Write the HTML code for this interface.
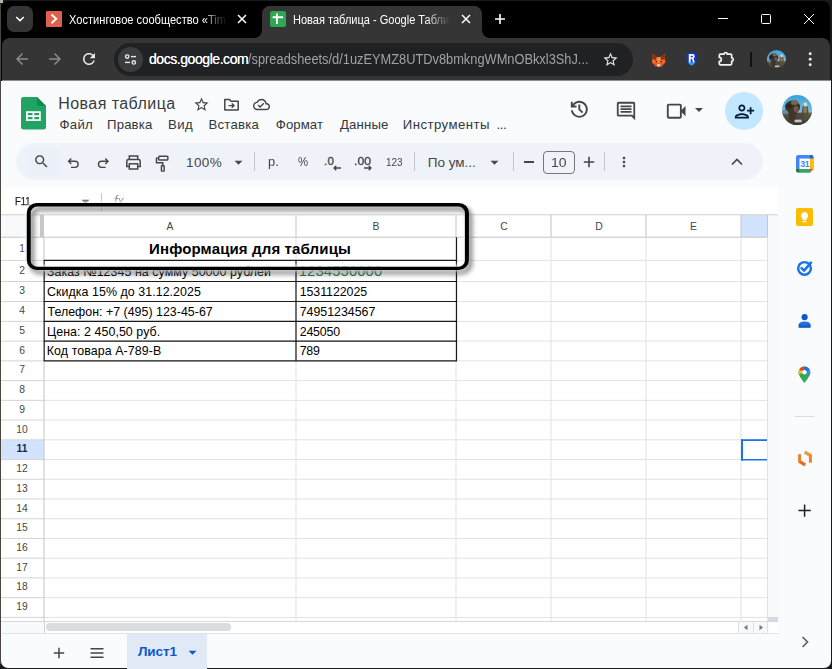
<!DOCTYPE html>
<html lang="ru"><head><meta charset="utf-8"><title>Новая таблица - Google Таблицы</title>
<style>
html,body{margin:0;padding:0;}
body{width:832px;height:669px;overflow:hidden;position:relative;background:#000;font-family:"Liberation Sans",sans-serif;}
.a{position:absolute;}
.t{position:absolute;white-space:nowrap;line-height:1;}
svg{position:absolute;overflow:visible;}
#win{left:1px;top:1px;width:829px;height:666.5px;background:#000;border-radius:7px 7px 7px 7px;overflow:hidden;}
#page{left:1px;top:81px;width:829.5px;height:586.5px;background:#f9fbfd;border-radius:0 0 7px 7px;}
</style></head><body>
<div class="a" style="left:0;top:0;width:832px;height:669px;background:#1a1a1a;"></div>
<div class="a" style="left:0;top:0;width:3px;height:3px;background:#b9b2a6;"></div>
<div class="a" style="left:0;top:4px;width:1px;height:660px;background:#4d4542;"></div>
<div class="a" id="win"></div>
<!-- chrome toolbar -->
<div class="a" style="left:2px;top:38px;width:828px;height:43px;background:#353535;border-radius:8px 8px 0 0;"></div>
<!-- tab search button -->
<div class="a" style="left:7px;top:6px;width:25.5px;height:25.5px;background:#353535;border-radius:7px;"></div>
<svg style="left:14px;top:14px" width="12" height="10" viewBox="0 0 12 10"><path d="M2.2 3 L6 6.6 L9.8 3" fill="none" stroke="#fff" stroke-width="1.5"/></svg>
<!-- tab1 favicon -->
<div class="a" style="left:46px;top:11px;width:15.5px;height:15.5px;background:#e0604f;border-radius:1px;"></div>
<svg style="left:46px;top:11px" width="16" height="16" viewBox="0 0 16 16"><path d="M5.4 3.4 L10.2 7.8 L5.4 12.2" fill="none" stroke="#fff" stroke-width="2"/></svg>
<!-- tab1 close -->
<svg style="left:236px;top:13px" width="12" height="12" viewBox="0 0 12 12"><path d="M2 2 L10 10 M10 2 L2 10" stroke="#fff" stroke-width="1.5"/></svg>
<!-- active tab -->
<div class="a" style="left:262px;top:6px;width:220px;height:34px;background:#353535;border-radius:8px 8px 0 0;"></div>
<svg style="left:254px;top:30px" width="8" height="8" viewBox="0 0 8 8"><path d="M8 0 V8 H0 A8 8 0 0 0 8 0Z" fill="#353535"/></svg>
<svg style="left:482px;top:30px" width="8" height="8" viewBox="0 0 8 8"><path d="M0 0 V8 H8 A8 8 0 0 1 0 0Z" fill="#353535"/></svg>
<!-- tab2 favicon -->
<div class="a" style="left:270px;top:11px;width:15.5px;height:15.5px;background:#2ea652;border-radius:2px;"></div>
<svg style="left:270px;top:11px" width="16" height="16" viewBox="0 0 16 16"><path d="M6.9 2.6 V13 M2.6 6.3 H13" fill="none" stroke="#fff" stroke-width="1.9"/></svg>
<svg style="left:460px;top:13px" width="12" height="12" viewBox="0 0 12 12"><path d="M2 2 L10 10 M10 2 L2 10" stroke="#fff" stroke-width="1.5"/></svg>
<!-- new tab -->
<svg style="left:494px;top:13px" width="12" height="12" viewBox="0 0 12 12"><path d="M6 1 V11 M1 6 H11" stroke="#fff" stroke-width="1.6"/></svg>
<!-- window controls -->
<svg style="left:717px;top:13px" width="12" height="12" viewBox="0 0 12 12"><path d="M1 5.5 H11" stroke="#fff" stroke-width="1"/></svg>
<svg style="left:760px;top:13px" width="12" height="12" viewBox="0 0 12 12"><rect x="1.5" y="1.5" width="9" height="9" rx="1" fill="none" stroke="#fff" stroke-width="1"/></svg>
<svg style="left:803px;top:13px" width="12" height="12" viewBox="0 0 12 12"><path d="M1 1 L11 11 M11 1 L1 11" stroke="#fff" stroke-width="1"/></svg>
<!-- nav icons -->
<svg style="left:13px;top:50px" width="18" height="18" viewBox="0 0 24 24"><path fill="#8a8a8a" d="M20 11H7.83l5.59-5.59L12 4l-8 8 8 8 1.41-1.41L7.83 13H20v-2z"/></svg>
<svg style="left:46px;top:50px" width="18" height="18" viewBox="0 0 24 24"><path fill="#8a8a8a" d="M12 4l-1.41 1.41L16.17 11H4v2h12.17l-5.58 5.59L12 20l8-8z"/></svg>
<svg style="left:80px;top:50px" width="18" height="18" viewBox="0 0 24 24"><path fill="#e8e8e8" d="M17.65 6.35C16.2 4.9 14.21 4 12 4c-4.42 0-7.99 3.58-7.99 8s3.57 8 7.99 8c3.73 0 6.84-2.55 7.73-6h-2.08c-.82 2.33-3.04 4-5.65 4-3.31 0-6-2.69-6-6s2.69-6 6-6c1.66 0 3.14.69 4.22 1.78L13 11h7V4l-2.35 2.35z"/></svg>
<!-- omnibox -->
<div class="a" style="left:114px;top:43px;width:519px;height:32.5px;background:#202124;border-radius:16.25px;"></div>
<div class="a" style="left:118px;top:47px;width:24.5px;height:24.5px;background:#3b3c3e;border-radius:50%;"></div>
<svg style="left:123px;top:52px" width="15" height="15" viewBox="0 0 15 15"><g fill="none" stroke="#e8e8e8" stroke-width="1.4"><circle cx="4.2" cy="4.6" r="1.7"/><path d="M8 4.6 H13"/><circle cx="10.8" cy="10.4" r="1.7"/><path d="M2 10.4 H7"/></g></svg>
<svg style="left:602px;top:50.5px" width="17" height="17" viewBox="0 0 24 24"><path fill="#e8e8e8" d="M22 9.24l-7.19-.62L12 2 9.190 8.630 2 9.240l5.460 4.730L5.820 21 12 17.270 18.180 21l-1.630-7.030L22 9.240zM12 15.400l-3.760 2.270 1-4.280-3.320-2.880 4.380-.38L12 6.100l1.710 4.040 4.380.38-3.320 2.880 1 4.280L12 15.400z"/></svg>
<!-- extensions -->
<svg style="left:650.5px;top:52.5px" width="15.4" height="14.4" viewBox="0 0 18 17"><path d="M1 .8 L7 4.600 H11 L17 .8 L16 7.500 L17 11 L12.500 16 H5.500 L1 11 L2 7.500Z" fill="#ee5f26"/><path d="M1 .8 L7 4.600 L5.500 8.500 L2 7.500Z M17 .8 L11 4.600 L12.500 8.500 L16 7.500Z" fill="#8a3315"/><path d="M7 4.600 H11 L12 9.500 L9 12 L6 9.500Z" fill="#f7843c"/><path d="M2 7.500 L5.500 8.500 L6 9.500 L4 12.500 L1 11Z M16 7.500 L12.500 8.500 L12 9.500 L14 12.500 L17 11Z" fill="#f26a2c"/><path d="M6.500 13.200 H11.500 L10.500 16 H7.500Z" fill="#e6d9d0"/><path d="M4 12.500 L6.500 13.200 L7.500 16 H5.500Z M14 12.500 L11.500 13.200 L10.500 16 H12.500Z" fill="#d9531f"/><circle cx="6.200" cy="10" r=".9" fill="#2a1a14"/><circle cx="11.800" cy="10" r=".9" fill="#2a1a14"/></svg>
<svg style="left:686.4px;top:52.2px" width="11.200" height="14" viewBox="0 0 16 20"><path d="M1 1 H15 V12 Q15 15.500 8 19.500 Q1 15.500 1 12Z" fill="#0c35d8"/><path d="M2.500 14.500 Q4.500 17.500 8 19.500 Q11.500 17.500 13.500 14.500Z" fill="#2f9ff5"/><path d="M4 3 H9.500 Q12.500 3 12.500 6.200 Q12.500 8.400 10.800 9.200 L12.600 14.500 H9.900 L8.400 9.800 H6.700 V14.500 H4Z M6.700 5.200 V7.600 H8.900 Q9.900 7.600 9.900 6.400 Q9.900 5.200 8.900 5.200Z" fill="#fff"/></svg>
<svg style="left:717.4px;top:50px" width="18" height="18" viewBox="0 0 18 18"><path d="M3.500 4.200 H7 A1.600 1.600 0 0 1 10.200 4.200 H13.500 Q14.700 4.200 14.700 5.400 V8 A1.600 1.600 0 0 1 14.700 11.200 V13.600 Q14.700 14.800 13.500 14.800 H3.500 Q2.300 14.800 2.300 13.600 V11.400 A2 2 0 0 0 2.300 7.400 V5.400 Q2.300 4.200 3.500 4.200Z" fill="none" stroke="#f2f2f2" stroke-width="1.700" stroke-linejoin="round"/></svg>
<div class="a" style="left:750px;top:52px;width:1.500px;height:15px;background:#111;"></div>
<svg style="left:766.5px;top:50px" width="19" height="19" viewBox="0 0 30 30"><defs><clipPath id="av2c"><circle cx="15" cy="15" r="15"/></clipPath><filter id="av2f" x="-10%" y="-10%" width="120%" height="120%"><feGaussianBlur stdDeviation=".7"/></filter><linearGradient id="av2g" x1="0" y1="0" x2="0" y2="1"><stop offset="0" stop-color="#36a3dc"/><stop offset=".55" stop-color="#79bcd8"/><stop offset=".62" stop-color="#5a5a4c"/><stop offset="1" stop-color="#3a332c"/></linearGradient></defs><g clip-path="url(#av2c)"><rect width="30" height="30" fill="url(#av2g)"/><g filter="url(#av2f)"><ellipse cx="10.500" cy="12" rx="7.500" ry="6.500" fill="#3d3028"/><ellipse cx="11" cy="21" rx="4.500" ry="7" fill="#43362c"/><ellipse cx="12.500" cy="7.500" rx="3.500" ry="2.500" fill="#7c6548"/><ellipse cx="7" cy="11" rx="2.500" ry="2" fill="#2a211c"/><ellipse cx="14" cy="14" rx="2.500" ry="3" fill="#6e5a44"/><ellipse cx="23" cy="17" rx="3.200" ry="8" fill="#5b4e3e"/><ellipse cx="23.200" cy="9.500" rx="2" ry="2.200" fill="#d9d6cc"/><ellipse cx="23" cy="15" rx="1.800" ry="3" fill="#8d7c62"/><ellipse cx="17.500" cy="21" rx="4" ry="3" fill="#4b4a3a"/><rect x="12.500" y="24.500" width="7" height="2.600" fill="#b9c6d6"/><ellipse cx="3" cy="17" rx="3" ry="2" fill="#6b86a0"/></g></g></svg>
<svg style="left:805px;top:50px" width="10" height="20" viewBox="0 0 10 20"><g fill="#f0f0f0"><circle cx="5.200" cy="3.700" r="1.450"/><circle cx="5.200" cy="9.300" r="1.450"/><circle cx="5.200" cy="14.700" r="1.450"/></g></svg>
<!-- tab fade masks -->
<div class="a" style="z-index:5;left:204px;top:8px;width:24px;height:24px;background:linear-gradient(90deg,rgba(0,0,0,0),rgba(0,0,0,.6) 45%,#000 98%);"></div>
<div class="a" style="z-index:5;left:426px;top:8px;width:26px;height:24px;background:linear-gradient(90deg,rgba(53,53,53,0),#353535 92%);"></div>

<!-- PAGE -->
<div class="a" id="page"></div>
<div class="a" style="left:1.500px;top:80.300px;width:829px;height:1.200px;background:#8d8d8d;"></div>
<!-- sheets logo -->
<svg style="left:20.500px;top:96.700px" width="25" height="32.500" viewBox="0 0 25 32.500"><path d="M2.500 0 H16 L25 9 V30 Q25 32.500 22.500 32.500 H2.500 Q0 32.500 0 30 V2.500 Q0 0 2.500 0Z" fill="#1fa463"/><path d="M16 0 L25 9 H18.500 Q16 9 16 6.500Z" fill="#128a4d"/><path d="M5 14.300 H19.800 V24 H5Z M6.800 16.100 V18.300 H11.500 V16.100Z M13.300 16.100 V18.300 H18 V16.100Z M6.800 20.100 V22.200 H11.500 V20.100Z M13.300 20.100 V22.200 H18 V20.100Z" fill="#fff" fill-rule="evenodd"/></svg>
<!-- title icons -->
<svg style="left:192.500px;top:96px" width="17" height="17" viewBox="0 0 24 24"><path fill="#444746" d="M22 9.240l-7.190-.62L12 2 9.190 8.630 2 9.240l5.460 4.730L5.820 21 12 17.270 18.180 21l-1.630-7.030L22 9.240zM12 15.400l-3.760 2.270 1-4.280-3.320-2.880 4.380-.38L12 6.100l1.710 4.040 4.380.38-3.320 2.880 1 4.280L12 15.400z"/></svg>
<svg style="left:222.500px;top:96.500px" width="17" height="16" viewBox="0 0 17 16"><path d="M1.800 2.500 H6.500 L8 4.200 H15.200 V13 H1.800Z" fill="none" stroke="#444746" stroke-width="1.500" stroke-linejoin="round"/><path d="M5.500 8.600 H10.800 M8.800 6.400 L11 8.600 L8.800 10.800" fill="none" stroke="#444746" stroke-width="1.400"/></svg>
<svg style="left:251.500px;top:96px" width="19" height="17" viewBox="0 0 24 24"><path fill="#444746" d="M19.350 10.040C18.670 6.590 15.640 4 12 4 9.110 4 6.600 5.640 5.350 8.040 2.340 8.360 0 10.910 0 14c0 3.310 2.690 6 6 6h13c2.760 0 5-2.240 5-5 0-2.640-2.050-4.780-4.650-4.960zM19 18H6c-2.210 0-4-1.790-4-4 0-2.050 1.530-3.760 3.560-3.970l1.070-.11.500-.95C8.080 7.140 9.940 6 12 6c2.620 0 4.880 1.860 5.390 4.430l.3 1.500 1.530.11c1.560.1 2.780 1.410 2.780 2.960 0 1.650-1.350 3-3 3zm-9-3.820l-2.090-2.090L6.500 13.500 10 17l6.010-6.010-1.410-1.410z"/></svg>
<!-- right header icons -->
<svg style="left:567.7px;top:98.3px" width="22.6" height="22.6" viewBox="0 0 24 24"><path fill="#444746" d="M12 21q-3.45 0-6.0125-2.2875T3.05 13H5.1q.35 2.6 2.3125 4.3T12 19q2.925 0 4.9625-2.0375T19 12q0-2.925-2.0375-4.9625T12 5q-1.725 0-3.225.8T6.25 8H9v2H3V4h2v2.35q1.275-1.6 3.1125-2.475T12 3q1.875 0 3.5125.7125t2.85 1.925q1.2125 1.2125 1.925 2.85T21 12q0 1.875-.7125 3.5125t-1.925 2.85q-1.2125 1.2125-2.85 1.925T12 21Zm2.8-4.8L11 12.4V7h2v4.6l3.2 3.2-1.4 1.4Z"/></svg>
<svg style="left:615px;top:100px" width="22" height="22" viewBox="0 0 24 24"><path fill="#444746" d="M21.990 4c0-1.100-.89-2-1.990-2H4c-1.100 0-2 .9-2 2v12c0 1.100.9 2 2 2h14l4 4-.01-18zM20 4v13.170L18.830 16H4V4h16zM6 12h12v2H6zm0-3h12v2H6zm0-3h12v2H6z"/></svg>
<svg style="left:665.2px;top:99.6px" width="22.4" height="22.4" viewBox="0 0 24 24"><path fill="#444746" d="M4 20q-.825 0-1.4125-.5875T2 18V6q0-.825.5875-1.4125T4 4h12q.825 0 1.4125.5875T18 6v4.5l4-4v11l-4-4V18q0 .825-.5875 1.4125T16 20H4Zm0-2h12V6H4v12Z"/></svg>
<svg style="left:694px;top:106.500px" width="10" height="6" viewBox="0 0 10 6"><path d="M1 1 H9 L5 5Z" fill="#444746"/></svg>
<div class="a" style="left:725px;top:91.500px;width:38px;height:38px;border-radius:50%;background:#c2e7ff;"></div>
<svg style="left:733.500px;top:100.500px" width="21" height="21" viewBox="0 0 24 24"><path fill="#001d35" d="M13 8c0-2.210-1.790-4-4-4S5 5.790 5 8s1.790 4 4 4 4-1.790 4-4zm-2 0c0 1.100-.9 2-2 2s-2-.9-2-2 .9-2 2-2 2 .9 2 2zM1 18v2h16v-2c0-2.660-5.330-4-8-4s-8 1.340-8 4zm2 0c.2-.71 3.300-2 6-2 2.690 0 5.780 1.280 6 2H3zm17-3v-3h3v-2h-3V7h-2v3h-3v2h3v3h2z"/></svg>
<svg style="left:782.2px;top:95px" width="30.2" height="30.2" viewBox="0 0 30 30"><defs><clipPath id="av1c"><circle cx="15" cy="15" r="15"/></clipPath><filter id="av1f" x="-10%" y="-10%" width="120%" height="120%"><feGaussianBlur stdDeviation=".7"/></filter><linearGradient id="av1g" x1="0" y1="0" x2="0" y2="1"><stop offset="0" stop-color="#36a3dc"/><stop offset=".55" stop-color="#79bcd8"/><stop offset=".62" stop-color="#5a5a4c"/><stop offset="1" stop-color="#3a332c"/></linearGradient></defs><g clip-path="url(#av1c)"><rect width="30" height="30" fill="url(#av1g)"/><g filter="url(#av1f)"><ellipse cx="10.500" cy="12" rx="7.500" ry="6.500" fill="#3d3028"/><ellipse cx="11" cy="21" rx="4.500" ry="7" fill="#43362c"/><ellipse cx="12.500" cy="7.500" rx="3.500" ry="2.500" fill="#7c6548"/><ellipse cx="7" cy="11" rx="2.500" ry="2" fill="#2a211c"/><ellipse cx="14" cy="14" rx="2.500" ry="3" fill="#6e5a44"/><ellipse cx="23" cy="17" rx="3.200" ry="8" fill="#5b4e3e"/><ellipse cx="23.200" cy="9.500" rx="2" ry="2.200" fill="#d9d6cc"/><ellipse cx="23" cy="15" rx="1.800" ry="3" fill="#8d7c62"/><ellipse cx="17.500" cy="21" rx="4" ry="3" fill="#4b4a3a"/><rect x="12.500" y="24.500" width="7" height="2.600" fill="#b9c6d6"/><ellipse cx="3" cy="17" rx="3" ry="2" fill="#6b86a0"/></g></g></svg>
<!-- toolbar pill -->
<div class="a" style="left:16.300px;top:142.800px;width:746.700px;height:37.700px;border-radius:18.750px;background:#eff3f9;"></div>
<div class="a" style="left:24.500px;top:148px;width:34.500px;height:28px;background:#ebf0f9;"></div>
<svg style="left:32.500px;top:153.200px" width="17" height="17" viewBox="0 0 24 24"><path fill="#444746" d="M15.500 14h-.79l-.28-.27C15.410 12.590 16 11.110 16 9.500 16 5.910 13.090 3 9.500 3S3 5.910 3 9.500 5.910 16 9.500 16c1.610 0 3.090-.59 4.230-1.570l.27.280v.79l5 4.990L20.490 19l-4.990-5zm-6 0C7.010 14 5 11.990 5 9.500S7.010 5 9.500 5 14 7.010 14 9.500 11.990 14 9.500 14z"/></svg>
<svg style="left:65.5px;top:156px" width="14.6" height="14.6" viewBox="0 0 16 16"><path d="M3 5.800 H10 A3.300 3.300 0 0 1 10 12.400 H5.500 M5.800 2.800 L2.800 5.800 L5.800 8.800" fill="none" stroke="#444746" stroke-width="1.500"/></svg>
<svg style="left:95.700px;top:156px" width="14.6" height="14.6" viewBox="0 0 16 16"><path d="M13 5.800 H6 A3.300 3.300 0 0 0 6 12.400 H10.500 M10.200 2.800 L13.200 5.800 L10.200 8.800" fill="none" stroke="#444746" stroke-width="1.500"/></svg>
<svg style="left:124.500px;top:154.200px" width="17" height="17" viewBox="0 0 17 17"><g fill="none" stroke="#444746" stroke-width="1.500"><path d="M4.300 5.500 V2 H12.700 V5.500"/><path d="M4.300 12.500 H1.800 V7.200 Q1.800 5.500 3.500 5.500 H13.500 Q15.200 5.500 15.200 7.200 V12.500 H12.700"/><rect x="4.300" y="9.800" width="8.400" height="5.200"/></g></svg>
<svg style="left:155px;top:154.500px" width="14.6" height="17.5" viewBox="0 0 15 18"><g fill="none" stroke="#444746" stroke-width="1.500"><rect x="3.800" y="1.200" width="9.400" height="4" rx=".8"/><path d="M3.800 3.200 H1.500 V8 H8 V11"/><rect x="6.600" y="11" width="2.800" height="5.600" rx=".5"/></g></svg>
<svg style="left:233.500px;top:159.500px" width="9" height="6" viewBox="0 0 9 6"><path d="M.500 .800 H8.500 L4.500 4.800Z" fill="#444746"/></svg>
<div class="a" style="left:254px;top:152px;width:1px;height:19px;background:#c7c7c7;"></div>
<svg style="left:332px;top:163.500px" width="11" height="8" viewBox="0 0 11 8"><path d="M9 4 H2 M4.300 1.700 L2 4 L4.300 6.300" fill="none" stroke="#444746" stroke-width="1.300"/></svg>
<svg style="left:362.500px;top:163.500px" width="11" height="8" viewBox="0 0 11 8"><path d="M1 4 H8 M5.700 1.700 L8 4 L5.700 6.300" fill="none" stroke="#444746" stroke-width="1.300"/></svg>
<div class="a" style="left:413.500px;top:152px;width:1px;height:19px;background:#c7c7c7;"></div>
<svg style="left:490px;top:159.500px" width="9" height="6" viewBox="0 0 9 6"><path d="M.500 .800 H8.500 L4.500 4.800Z" fill="#444746"/></svg>
<div class="a" style="left:512.500px;top:152px;width:1px;height:19px;background:#c7c7c7;"></div>
<div class="a" style="left:523.500px;top:161.300px;width:10.500px;height:1.400px;background:#444746;"></div>
<div class="a" style="left:543px;top:151px;width:30px;height:20.500px;border:1px solid #747775;border-radius:4px;"></div>
<svg style="left:583px;top:156px" width="12" height="12" viewBox="0 0 12 12"><path d="M6 .800 V11.200 M.800 6 H11.200" stroke="#444746" stroke-width="1.600"/></svg>
<div class="a" style="left:604px;top:152px;width:1px;height:19px;background:#c7c7c7;"></div>
<svg style="left:616px;top:154px" width="16" height="16" viewBox="0 0 24 24"><path fill="#444746" d="M12 8c1.100 0 2-.9 2-2s-.9-2-2-2-2 .9-2 2 .9 2 2 2zm0 2c-1.100 0-2 .9-2 2s.9 2 2 2 2-.9 2-2-.9-2-2-2zm0 6c-1.100 0-2 .9-2 2s.9 2 2 2 2-.9 2-2-.9-2-2-2z"/></svg>
<svg style="left:730px;top:156.500px" width="14" height="10" viewBox="0 0 14 10"><path d="M2 7.500 L7 2.500 L12 7.500" fill="none" stroke="#444746" stroke-width="1.700"/></svg>
<!-- formula bar + grid white -->
<div class="a" style="left:1px;top:188px;width:777px;height:445px;background:#fff;"></div>
<svg style="left:81px;top:198.700px" width="9" height="6" viewBox="0 0 9 6"><path d="M.500 .800 H8.500 L4.500 4.800Z" fill="#444746"/></svg>
<div class="a" style="left:100.500px;top:193px;width:1px;height:18px;background:#c7c7c7;"></div>
<div class="a" style="left:1px;top:215px;width:39px;height:22px;background:#f8f9fa;"></div>
<div class="a" style="left:39.5px;top:215px;width:4.5px;height:22.3px;background:#c6c8c7;"></div>
<div class="a" style="left:741px;top:215px;width:26.5px;height:22.3px;background:#d3e3fd;"></div>
<div class="a" style="left:1px;top:439.82px;width:43px;height:19.73px;background:#d3e3fd;"></div>
<div class="a" style="left:767.5px;top:215px;width:10.5px;height:418px;background:#f8f9fa;"></div>
<div class="a" style="left:767.5px;top:617.4px;width:10.5px;height:4.2px;background:#d3d9e4;"></div>
<svg style="left:0;top:0" width="832" height="669" viewBox="0 0 832 669" shape-rendering="auto">
<line x1="1.00" y1="214.80" x2="778.00" y2="214.80" stroke="#d0d0d0" stroke-width="1.1"/>
<line x1="1.00" y1="237.30" x2="767.50" y2="237.30" stroke="#c4c4c4" stroke-width="1.1"/>
<line x1="1.00" y1="260.40" x2="44.00" y2="260.40" stroke="#d4d4d4" stroke-width="1"/>
<line x1="44.00" y1="260.40" x2="767.50" y2="260.40" stroke="#e2e2e2" stroke-width="1"/>
<line x1="1.00" y1="281.50" x2="44.00" y2="281.50" stroke="#d4d4d4" stroke-width="1"/>
<line x1="44.00" y1="281.50" x2="767.50" y2="281.50" stroke="#e2e2e2" stroke-width="1"/>
<line x1="1.00" y1="301.50" x2="44.00" y2="301.50" stroke="#d4d4d4" stroke-width="1"/>
<line x1="44.00" y1="301.50" x2="767.50" y2="301.50" stroke="#e2e2e2" stroke-width="1"/>
<line x1="1.00" y1="321.40" x2="44.00" y2="321.40" stroke="#d4d4d4" stroke-width="1"/>
<line x1="44.00" y1="321.40" x2="767.50" y2="321.40" stroke="#e2e2e2" stroke-width="1"/>
<line x1="1.00" y1="341.10" x2="44.00" y2="341.10" stroke="#d4d4d4" stroke-width="1"/>
<line x1="44.00" y1="341.10" x2="767.50" y2="341.10" stroke="#e2e2e2" stroke-width="1"/>
<line x1="1.00" y1="360.90" x2="44.00" y2="360.90" stroke="#d4d4d4" stroke-width="1"/>
<line x1="44.00" y1="360.90" x2="767.50" y2="360.90" stroke="#e2e2e2" stroke-width="1"/>
<line x1="1.00" y1="380.63" x2="44.00" y2="380.63" stroke="#d4d4d4" stroke-width="1"/>
<line x1="44.00" y1="380.63" x2="767.50" y2="380.63" stroke="#e2e2e2" stroke-width="1"/>
<line x1="1.00" y1="400.36" x2="44.00" y2="400.36" stroke="#d4d4d4" stroke-width="1"/>
<line x1="44.00" y1="400.36" x2="767.50" y2="400.36" stroke="#e2e2e2" stroke-width="1"/>
<line x1="1.00" y1="420.09" x2="44.00" y2="420.09" stroke="#d4d4d4" stroke-width="1"/>
<line x1="44.00" y1="420.09" x2="767.50" y2="420.09" stroke="#e2e2e2" stroke-width="1"/>
<line x1="1.00" y1="439.82" x2="44.00" y2="439.82" stroke="#d4d4d4" stroke-width="1"/>
<line x1="44.00" y1="439.82" x2="767.50" y2="439.82" stroke="#e2e2e2" stroke-width="1"/>
<line x1="1.00" y1="459.55" x2="44.00" y2="459.55" stroke="#d4d4d4" stroke-width="1"/>
<line x1="44.00" y1="459.55" x2="767.50" y2="459.55" stroke="#e2e2e2" stroke-width="1"/>
<line x1="1.00" y1="479.28" x2="44.00" y2="479.28" stroke="#d4d4d4" stroke-width="1"/>
<line x1="44.00" y1="479.28" x2="767.50" y2="479.28" stroke="#e2e2e2" stroke-width="1"/>
<line x1="1.00" y1="499.01" x2="44.00" y2="499.01" stroke="#d4d4d4" stroke-width="1"/>
<line x1="44.00" y1="499.01" x2="767.50" y2="499.01" stroke="#e2e2e2" stroke-width="1"/>
<line x1="1.00" y1="518.74" x2="44.00" y2="518.74" stroke="#d4d4d4" stroke-width="1"/>
<line x1="44.00" y1="518.74" x2="767.50" y2="518.74" stroke="#e2e2e2" stroke-width="1"/>
<line x1="1.00" y1="538.47" x2="44.00" y2="538.47" stroke="#d4d4d4" stroke-width="1"/>
<line x1="44.00" y1="538.47" x2="767.50" y2="538.47" stroke="#e2e2e2" stroke-width="1"/>
<line x1="1.00" y1="558.20" x2="44.00" y2="558.20" stroke="#d4d4d4" stroke-width="1"/>
<line x1="44.00" y1="558.20" x2="767.50" y2="558.20" stroke="#e2e2e2" stroke-width="1"/>
<line x1="1.00" y1="577.93" x2="44.00" y2="577.93" stroke="#d4d4d4" stroke-width="1"/>
<line x1="44.00" y1="577.93" x2="767.50" y2="577.93" stroke="#e2e2e2" stroke-width="1"/>
<line x1="1.00" y1="597.66" x2="44.00" y2="597.66" stroke="#d4d4d4" stroke-width="1"/>
<line x1="44.00" y1="597.66" x2="767.50" y2="597.66" stroke="#e2e2e2" stroke-width="1"/>
<line x1="1.00" y1="617.39" x2="44.00" y2="617.39" stroke="#d4d4d4" stroke-width="1"/>
<line x1="44.00" y1="617.39" x2="767.50" y2="617.39" stroke="#e2e2e2" stroke-width="1"/>
<line x1="44.00" y1="237.30" x2="44.00" y2="621.50" stroke="#c8c8c8" stroke-width="1.1"/>
<line x1="296.00" y1="215.00" x2="296.00" y2="237.30" stroke="#c8c8c8" stroke-width="1.1"/>
<line x1="296.00" y1="237.30" x2="296.00" y2="621.50" stroke="#e2e2e2" stroke-width="1"/>
<line x1="456.00" y1="215.00" x2="456.00" y2="237.30" stroke="#c8c8c8" stroke-width="1.1"/>
<line x1="456.00" y1="237.30" x2="456.00" y2="621.50" stroke="#e2e2e2" stroke-width="1"/>
<line x1="551.00" y1="215.00" x2="551.00" y2="237.30" stroke="#c8c8c8" stroke-width="1.1"/>
<line x1="551.00" y1="237.30" x2="551.00" y2="621.50" stroke="#e2e2e2" stroke-width="1"/>
<line x1="646.00" y1="215.00" x2="646.00" y2="237.30" stroke="#c8c8c8" stroke-width="1.1"/>
<line x1="646.00" y1="237.30" x2="646.00" y2="621.50" stroke="#e2e2e2" stroke-width="1"/>
<line x1="741.00" y1="215.00" x2="741.00" y2="237.30" stroke="#c8c8c8" stroke-width="1.1"/>
<line x1="741.00" y1="237.30" x2="741.00" y2="621.50" stroke="#e2e2e2" stroke-width="1"/>
<line x1="767.50" y1="215.00" x2="767.50" y2="237.30" stroke="#c8c8c8" stroke-width="1.1"/>
<line x1="767.50" y1="237.30" x2="767.50" y2="621.50" stroke="#e2e2e2" stroke-width="1"/>
<line x1="43.70" y1="260.40" x2="457.00" y2="260.40" stroke="#1a1a1a" stroke-width="1.2"/>
<line x1="43.70" y1="281.50" x2="457.00" y2="281.50" stroke="#1a1a1a" stroke-width="1.2"/>
<line x1="43.70" y1="301.50" x2="457.00" y2="301.50" stroke="#1a1a1a" stroke-width="1.2"/>
<line x1="43.70" y1="321.40" x2="457.00" y2="321.40" stroke="#1a1a1a" stroke-width="1.2"/>
<line x1="43.70" y1="341.10" x2="457.00" y2="341.10" stroke="#1a1a1a" stroke-width="1.2"/>
<line x1="43.70" y1="360.90" x2="457.00" y2="360.90" stroke="#1a1a1a" stroke-width="1.2"/>
<line x1="44.20" y1="260.40" x2="44.20" y2="360.90" stroke="#1a1a1a" stroke-width="1.1"/>
<line x1="456.50" y1="237.30" x2="456.50" y2="360.90" stroke="#1a1a1a" stroke-width="1.2"/>
<line x1="296.00" y1="260.40" x2="296.00" y2="360.90" stroke="#1a1a1a" stroke-width="1.2"/>
</svg>
<div class="a" style="left:1px;top:621.5px;width:777px;height:11.5px;background:#fff;"></div>
<div class="a" style="left:1px;top:621.5px;width:43px;height:11.5px;background:#f8f9fa;"></div>
<div class="a" style="left:1px;top:621.2px;width:766.5px;height:1px;background:#d9d9d9;"></div>
<div class="a" style="left:43.5px;top:621.5px;width:1px;height:11.5px;background:#d0d0d0;"></div>
<div class="a" style="left:46px;top:623px;width:184.5px;height:8.3px;border-radius:4.2px;background:#dadce0;"></div>
<div class="a" style="left:738px;top:621.8px;width:29.5px;height:11px;background:#f8f9fa;border-left:1px solid #e0e0e0;"></div>
<div class="a" style="left:753px;top:621.8px;width:1px;height:11px;background:#e0e0e0;"></div>
<div class="a" style="left:767px;top:621.8px;width:1px;height:11px;background:#e0e0e0;"></div>
<svg style="left:742px;top:624px" width="8" height="7" viewBox="0 0 8 7"><path d="M5.5 .8 V6.2 L2 3.5Z" fill="#777"/></svg>
<svg style="left:757px;top:624px" width="8" height="7" viewBox="0 0 8 7"><path d="M2.5 .8 V6.2 L6 3.5Z" fill="#777"/></svg>
<div class="a" style="left:740.5px;top:439.32px;width:40px;height:21.23px;box-sizing:border-box;border:2px solid #1a73e8;border-right:none;clip-path:inset(0 13.5px 0 0);"></div>
<!-- side panel icons -->
<!-- calendar -->
<svg style="left:795.700px;top:154.600px" width="17.400" height="17.600" viewBox="0 0 18 18"><rect x="0" y="0" width="18" height="18" rx="2.300" fill="#4285f4"/><path d="M14.400 0 H15.700 Q18 0 18 2.300 V3.600 H14.400Z" fill="#1967d2"/><path d="M14.400 3.600 H18 V14.400 H14.400Z" fill="#fbbc04"/><path d="M0 14.400 H3.600 V18 H2.300 Q0 18 0 15.700Z" fill="#188038"/><path d="M3.600 14.400 H14.400 V18 H3.600Z" fill="#34a853"/><path d="M14.400 14.400 H18 L14.400 18Z" fill="#ea4335"/><path d="M18 14.400 V18 H14.400Z" fill="#f9fbfd"/><rect x="3.600" y="3.600" width="10.800" height="10.800" fill="#fff"/><text x="9" y="12.400" font-family="Liberation Sans, sans-serif" font-size="9" font-weight="700" fill="#4285f4" text-anchor="middle" letter-spacing="-.5">31</text></svg>
<!-- keep -->
<svg style="left:796px;top:207.500px" width="17" height="18" viewBox="0 0 17 18"><rect x="0" y="0" width="17" height="18" rx="2" fill="#fbbc04"/><path d="M8.500 4 A3.600 3.600 0 0 1 10.600 10.500 V11.800 H6.400 V10.500 A3.600 3.600 0 0 1 8.500 4Z" fill="#fff"/><rect x="6.600" y="12.800" width="3.800" height="1.400" fill="#fff"/></svg>
<!-- tasks -->
<svg style="left:796px;top:259px" width="18" height="18" viewBox="0 0 19 19"><circle cx="9" cy="10" r="6.700" fill="none" stroke="#1a73e8" stroke-width="2.600"/><path d="M5.800 9.600 L8.500 12.300 L15.800 3.800" fill="none" stroke="#1a73e8" stroke-width="2.600" stroke-linecap="round" stroke-linejoin="round"/><path d="M13.200 2.200 L17.800 1.200 L17 6Z" fill="#f9fbfd" opacity="0"/></svg>
<!-- contacts -->
<svg style="left:798px;top:312.8px" width="13.2" height="15.6" viewBox="0 0 16 18"><circle cx="8" cy="4.600" r="3.700" fill="#0b57d0"/><path d="M.800 16.800 V14.500 Q.800 10 8 10 Q15.200 10 15.200 14.500 V16.800 Q15.200 17.500 14.500 17.500 H1.500 Q.800 17.500 .800 16.800Z" fill="#1a73e8"/><path d="M.800 13 Q8 16 15.200 13 V16.800 Q15.200 17.500 14.500 17.500 H1.500 Q.800 17.500 .800 16.800Z" fill="#174ea6" opacity=".55"/></svg>
<!-- maps -->
<svg style="left:798px;top:365.6px" width="12.8" height="17.4" viewBox="0 0 14 19"><path d="M7 .5 A6.500 6.500 0 0 1 13.500 7 Q13.500 10.500 7 18.500 Q.500 10.500 .500 7 A6.500 6.500 0 0 1 7 .5Z" fill="#34a853"/><path d="M7 .5 A6.500 6.500 0 0 0 1.300 3.800 L7 7Z" fill="#ea4335"/><path d="M1.300 3.800 A6.500 6.500 0 0 0 .8 9 L7 7Z" fill="#fbbc04"/><path d="M7 .5 A6.500 6.500 0 0 1 12.700 3.800 L7 7Z" fill="#1a73e8"/><path d="M12.700 3.800 A6.500 6.500 0 0 1 13.500 7 Q13.500 8.500 12.300 10.800 L7 7Z" fill="#4285f4"/><circle cx="7" cy="6.800" r="2.500" fill="#fff"/></svg>
<div class="a" style="left:795px;top:416px;width:19px;height:1px;background:#dadce0;"></div>
<!-- orange addon -->
<svg style="left:796.500px;top:450px" width="16" height="17" viewBox="0 0 16 17"><path d="M2.600 4.300 V11.600 L8.200 14.900" fill="none" stroke="#f0812a" stroke-width="3"/><path d="M13.400 12.700 V5.400 L7.800 2.100" fill="none" stroke="#f0812a" stroke-width="3"/><path d="M4.100 10.800 L8.900 13.600 L7.500 16.200 L2.300 13.200Z" fill="#d9621d" opacity=".6"/><path d="M11.900 6.200 L7.100 3.400 L8.500 .8 L13.700 3.800Z" fill="#f6a455" opacity=".7"/></svg>
<svg style="left:798px;top:504.400px" width="13.200" height="13.200" viewBox="0 0 15 15"><path d="M7.500 .5 V14.500 M.5 7.500 H14.500" stroke="#1f1f1f" stroke-width="1.700"/></svg>

<!-- bottom bar -->
<div class="a" style="left:1.500px;top:633px;width:777px;height:1px;background:#e1e3e6;"></div>
<div class="a" style="left:127px;top:633.500px;width:79.500px;height:35px;background:#e1e9f7;"></div>
<svg style="left:53px;top:646.500px" width="12" height="12" viewBox="0 0 12 12"><path d="M6 .800 V11.200 M.800 6 H11.200" stroke="#444746" stroke-width="1.500"/></svg>
<svg style="left:90px;top:646.500px" width="14" height="12" viewBox="0 0 14 12"><path d="M.500 1.800 H13.500 M.500 6 H13.500 M.500 10.200 H13.500" stroke="#444746" stroke-width="1.500"/></svg>
<svg style="left:187.500px;top:650px" width="9" height="6" viewBox="0 0 9 6"><path d="M.500 .800 H8.500 L4.500 4.800Z" fill="#0b57d0"/></svg>
<svg style="left:798px;top:634px" width="14" height="16" viewBox="0 0 14 16"><path d="M4.500 3 L9.500 8 L4.500 13" fill="none" stroke="#5f6368" stroke-width="1.700"/></svg>

<span class="t" id="t0" style="left:69.00px;top:13px;line-height:14px;font-size:12px;font-weight:400;color:#fff;transform-origin:0 0;transform:scaleX(0.9245);">Хостинговое сообщество «Tim</span>
<span class="t" id="t1" style="left:293.00px;top:13px;line-height:14px;font-size:12px;font-weight:400;color:#fff;transform-origin:0 0;transform:scaleX(0.9190);">Новая таблица - Google Табли</span>
<span class="t" id="t2" style="left:149.00px;top:51px;line-height:16px;font-size:14px;font-weight:400;color:#fff;letter-spacing:-0.441px;text-shadow:0 0 .4px #fff;">docs.google.com</span>
<span class="t" id="t3" style="left:248.30px;top:51px;line-height:16px;font-size:14px;font-weight:400;color:#a2a2a2;transform-origin:0 0;transform:scaleX(0.9156);">/spreadsheets/d/1uzEYMZ8UTDv8bmkngWMnOBkxl3ShJ...</span>
<span class="t" id="t4" style="left:58.20px;top:95px;line-height:17px;font-size:16px;font-weight:400;color:#3a3d40;letter-spacing:0.449px;">Новая таблица</span>
<span class="t" id="t5" style="left:59.50px;top:117px;line-height:15px;font-size:13.2px;font-weight:400;color:#33373a;letter-spacing:0.258px;">Файл</span>
<span class="t" id="t6" style="left:107.00px;top:117px;line-height:15px;font-size:13.2px;font-weight:400;color:#33373a;letter-spacing:0.158px;">Правка</span>
<span class="t" id="t7" style="left:168.00px;top:117px;line-height:15px;font-size:13.2px;font-weight:400;color:#33373a;letter-spacing:0.419px;">Вид</span>
<span class="t" id="t8" style="left:208.50px;top:117px;line-height:15px;font-size:13.2px;font-weight:400;color:#33373a;letter-spacing:0.220px;">Вставка</span>
<span class="t" id="t9" style="left:275.80px;top:117px;line-height:15px;font-size:13.2px;font-weight:400;color:#33373a;letter-spacing:0.079px;">Формат</span>
<span class="t" id="t10" style="left:340.00px;top:117px;line-height:15px;font-size:13.2px;font-weight:400;color:#33373a;letter-spacing:0.138px;">Данные</span>
<span class="t" id="t11" style="left:402.80px;top:117px;line-height:15px;font-size:13.2px;font-weight:400;color:#33373a;letter-spacing:0.445px;">Инструменты</span>
<span class="t" id="t12" style="left:496.50px;top:117px;line-height:15px;font-size:13.2px;font-weight:400;color:#33373a;letter-spacing:-0.414px;">...</span>
<span class="t" id="t13" style="left:186.00px;top:155px;line-height:15px;font-size:13.5px;font-weight:400;color:#444746;letter-spacing:0.425px;">100%</span>
<span class="t" id="t14" style="left:268.00px;top:154px;line-height:15px;font-size:13.5px;font-weight:400;color:#444746;transform-origin:0 0;transform:scaleX(0.9517);">р.</span>
<span class="t" id="t15" style="left:298.00px;top:155px;line-height:14px;font-size:12.5px;font-weight:400;color:#444746;transform-origin:0 0;transform:scaleX(0.9091);">%</span>
<span class="t" id="t16" style="left:324.00px;top:155px;line-height:12px;font-size:11.5px;font-weight:400;color:#444746;letter-spacing:0.305px;-webkit-text-stroke:.35px #444746;">.0</span>
<span class="t" id="t17" style="left:353.94px;top:155px;line-height:12px;font-size:11.5px;font-weight:400;color:#444746;transform-origin:0 0;transform:scaleX(1.0623);-webkit-text-stroke:.35px #444746;">.00</span>
<span class="t" id="t18" style="left:386.00px;top:156px;line-height:12px;font-size:11px;font-weight:400;color:#444746;transform-origin:0 0;transform:scaleX(0.9048);">123</span>
<span class="t" id="t19" style="left:427.80px;top:155px;line-height:15px;font-size:13.5px;font-weight:400;color:#444746;letter-spacing:-0.020px;">По ум...</span>
<span class="t" id="t20" style="left:550.96px;top:155px;line-height:15px;font-size:13.5px;font-weight:400;color:#444746;transform-origin:0 0;transform:scaleX(1.0364);">10</span>
<span class="t" id="t21" style="left:14.60px;top:195px;line-height:12px;font-size:11.5px;font-weight:400;color:#1f1f1f;transform-origin:0 0;transform:scaleX(0.8187);-webkit-text-stroke:.25px #1f1f1f;">F11</span>
<span class="t" id="t22" style="left:113.50px;top:193px;line-height:16px;font-size:14.5px;font-weight:400;color:#8d9196;transform-origin:0 0;transform:scaleX(0.8614);font-style:italic;font-family:"Liberation Serif",serif;">fx</span>
<span class="t" id="t23" style="left:170.00px;top:221px;line-height:11px;font-size:10.4px;font-weight:400;color:#444746;transform:translateX(-50%);">A</span>
<span class="t" id="t24" style="left:376.00px;top:221px;line-height:11px;font-size:10.4px;font-weight:400;color:#444746;transform:translateX(-50%);">B</span>
<span class="t" id="t25" style="left:504.00px;top:221px;line-height:11px;font-size:10.4px;font-weight:400;color:#444746;transform:translateX(-50%);">C</span>
<span class="t" id="t26" style="left:599.00px;top:221px;line-height:11px;font-size:10.4px;font-weight:400;color:#444746;transform:translateX(-50%);">D</span>
<span class="t" id="t27" style="left:693.50px;top:221px;line-height:11px;font-size:10.4px;font-weight:400;color:#444746;transform:translateX(-50%);">E</span>
<span class="t" id="t28" style="left:22.00px;top:243px;line-height:11px;font-size:10.3px;font-weight:400;color:#444746;transform:translateX(-50%);">1</span>
<span class="t" id="t29" style="left:22.00px;top:265px;line-height:11px;font-size:10.3px;font-weight:400;color:#444746;transform:translateX(-50%);">2</span>
<span class="t" id="t30" style="left:22.00px;top:285px;line-height:11px;font-size:10.3px;font-weight:400;color:#444746;transform:translateX(-50%);">3</span>
<span class="t" id="t31" style="left:22.00px;top:305px;line-height:11px;font-size:10.3px;font-weight:400;color:#444746;transform:translateX(-50%);">4</span>
<span class="t" id="t32" style="left:22.00px;top:325px;line-height:11px;font-size:10.3px;font-weight:400;color:#444746;transform:translateX(-50%);">5</span>
<span class="t" id="t33" style="left:22.00px;top:345px;line-height:11px;font-size:10.3px;font-weight:400;color:#444746;transform:translateX(-50%);">6</span>
<span class="t" id="t34" style="left:22.00px;top:364px;line-height:11px;font-size:10.3px;font-weight:400;color:#444746;transform:translateX(-50%);">7</span>
<span class="t" id="t35" style="left:22.00px;top:384px;line-height:11px;font-size:10.3px;font-weight:400;color:#444746;transform:translateX(-50%);">8</span>
<span class="t" id="t36" style="left:22.00px;top:404px;line-height:11px;font-size:10.3px;font-weight:400;color:#444746;transform:translateX(-50%);">9</span>
<span class="t" id="t37" style="left:22.00px;top:424px;line-height:11px;font-size:10.3px;font-weight:400;color:#444746;transform:translateX(-50%);">10</span>
<span class="t" id="t38" style="left:22.00px;top:443px;line-height:11px;font-size:10.3px;font-weight:700;color:#0b2a5c;transform:translateX(-50%);">11</span>
<span class="t" id="t39" style="left:22.00px;top:463px;line-height:11px;font-size:10.3px;font-weight:400;color:#444746;transform:translateX(-50%);">12</span>
<span class="t" id="t40" style="left:22.00px;top:483px;line-height:11px;font-size:10.3px;font-weight:400;color:#444746;transform:translateX(-50%);">13</span>
<span class="t" id="t41" style="left:22.00px;top:503px;line-height:11px;font-size:10.3px;font-weight:400;color:#444746;transform:translateX(-50%);">14</span>
<span class="t" id="t42" style="left:22.00px;top:522px;line-height:11px;font-size:10.3px;font-weight:400;color:#444746;transform:translateX(-50%);">15</span>
<span class="t" id="t43" style="left:22.00px;top:542px;line-height:11px;font-size:10.3px;font-weight:400;color:#444746;transform:translateX(-50%);">16</span>
<span class="t" id="t44" style="left:22.00px;top:562px;line-height:11px;font-size:10.3px;font-weight:400;color:#444746;transform:translateX(-50%);">17</span>
<span class="t" id="t45" style="left:22.00px;top:581px;line-height:11px;font-size:10.3px;font-weight:400;color:#444746;transform:translateX(-50%);">18</span>
<span class="t" id="t46" style="left:22.00px;top:601px;line-height:11px;font-size:10.3px;font-weight:400;color:#444746;transform:translateX(-50%);">19</span>
<span class="t" id="t47" style="left:149.00px;top:240px;line-height:17px;font-size:15px;font-weight:700;color:#000;letter-spacing:0.142px;">Информация для таблицы</span>
<span class="t" id="t48" style="left:47.00px;top:265px;line-height:14px;font-size:12.4px;font-weight:400;color:#000;letter-spacing:0.060px;">Заказ №12345 на сумму 50000 рублей</span>
<span class="t" id="t49" style="left:47.00px;top:285px;line-height:14px;font-size:12.4px;font-weight:400;color:#000;letter-spacing:0.066px;">Скидка 15% до 31.12.2025</span>
<span class="t" id="t50" style="left:47.50px;top:305px;line-height:14px;font-size:12.4px;font-weight:400;color:#000;letter-spacing:0.018px;">Телефон: +7 (495) 123-45-67</span>
<span class="t" id="t51" style="left:47.00px;top:325px;line-height:14px;font-size:12.4px;font-weight:400;color:#000;letter-spacing:0.065px;">Цена: 2 450,50 руб.</span>
<span class="t" id="t52" style="left:46.80px;top:344px;line-height:14px;font-size:12.4px;font-weight:400;color:#000;letter-spacing:0.089px;">Код товара A-789-B</span>
<span class="t" id="t53" style="left:298.70px;top:263px;line-height:16px;font-size:14.8px;font-weight:400;color:#2a7d4f;letter-spacing:0.137px;">1234550000</span>
<span class="t" id="t54" style="left:299.70px;top:285px;line-height:14px;font-size:12.4px;font-weight:400;color:#000;letter-spacing:-0.055px;">1531122025</span>
<span class="t" id="t55" style="left:299.70px;top:305px;line-height:14px;font-size:12.4px;font-weight:400;color:#000;letter-spacing:-0.011px;">74951234567</span>
<span class="t" id="t56" style="left:299.70px;top:325px;line-height:14px;font-size:12.4px;font-weight:400;color:#000;letter-spacing:-0.191px;">245050</span>
<span class="t" id="t57" style="left:299.70px;top:344px;line-height:14px;font-size:12.4px;font-weight:400;color:#000;letter-spacing:-0.291px;">789</span>
<span class="t" id="t58" style="left:138.00px;top:644px;line-height:15px;font-size:13.5px;font-weight:700;color:#0b57d0;letter-spacing:-0.098px;">Лист1</span>
<svg style="left:0;top:0" width="832" height="669" viewBox="0 0 832 669">
<defs>
<filter id="glow" x="-5%" y="-30%" width="110%" height="170%" color-interpolation-filters="sRGB">
<feGaussianBlur in="SourceAlpha" stdDeviation="2.600" result="b"/>
<feColorMatrix in="b" type="matrix" values="0 0 0 0 1  0 0 0 0 1  0 0 0 0 1  0 0 0 1.900 0" result="w"/>
<feOffset in="SourceAlpha" dx="3" dy="3.600" result="o"/>
<feGaussianBlur in="o" stdDeviation="2.900" result="ob"/>
<feColorMatrix in="ob" type="matrix" values="0 0 0 0 0  0 0 0 0 0  0 0 0 0 0  0 0 0 .58 0" result="d"/>
<feMerge><feMergeNode in="w"/><feMergeNode in="d"/><feMergeNode in="SourceGraphic"/></feMerge>
</filter>
</defs>
<path fill-rule="evenodd" fill="#000" filter="url(#glow)" d="M36.80 202.90 H458.90 A10 10 0 0 1 468.90 212.90 V259.90 A10 10 0 0 1 458.90 269.90 H36.80 A10 10 0 0 1 26.80 259.90 V212.90 A10 10 0 0 1 36.80 202.90Z M37.00 206.60 H458.60 A6.3 6.3 0 0 1 464.90 212.90 V260.40 A6.3 6.3 0 0 1 458.60 266.70 H37.00 A6.3 6.3 0 0 1 30.70 260.40 V212.90 A6.3 6.3 0 0 1 37.00 206.60Z"/>
</svg>

</body></html>
